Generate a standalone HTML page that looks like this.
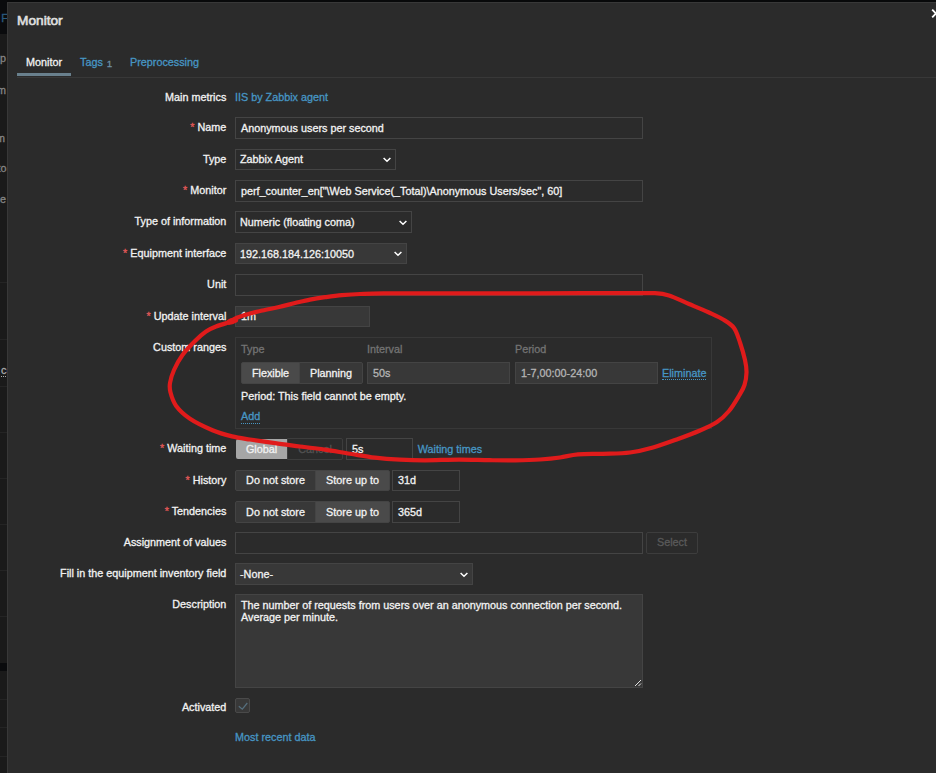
<!DOCTYPE html>
<html><head><meta charset="utf-8"><title>Monitor</title>
<style>
*{box-sizing:border-box;margin:0;padding:0}
html,body{width:936px;height:773px;overflow:hidden;background:#08090a;font-family:"Liberation Sans",Arial,sans-serif;font-size:10.8px;color:#f2f2f2;-webkit-text-stroke:0.3px}
.abs{position:absolute}
#bgstrip{position:absolute;left:0;top:0;width:7px;height:773px;background:#1a1a1a;overflow:hidden}
#bgstrip i{position:absolute;left:0;width:8px;height:1px;background:#242424}
#bgstrip span{position:absolute;left:0;font-size:10.8px;line-height:14px;color:#858585;white-space:nowrap}
#modal{position:absolute;left:7px;top:2px;width:940px;height:790px;background:#2b2b2b;border:1px solid #383838}
h4{position:absolute;left:17px;top:12px;font-size:13.7px;font-weight:normal;color:#e0e0e0;line-height:18px;-webkit-text-stroke:0.6px #e0e0e0}
.close{position:absolute;left:928px;top:7px;font-size:14px;color:#fff;line-height:14px;font-weight:bold}
.tabline{position:absolute;left:17px;top:77px;width:930px;height:1px;background:#383838}
.tab{position:absolute;top:55px;line-height:14px;color:#4796c4;white-space:nowrap}
.tab.act{color:#f2f2f2}
.tabund{position:absolute;left:17px;top:73px;width:54px;height:3px;background:#69808d}
.lbl{position:absolute;right:709.7px;white-space:nowrap;line-height:14px;text-align:right;color:#f2f2f2}
.lbl b{color:#e45959;font-weight:normal}
.inp{position:absolute;left:235px;height:22px;border:1px solid #444;background:#2b2b2b;color:#f2f2f2;line-height:20px;padding-left:5px;white-space:nowrap;overflow:hidden}
.ro{background:#383838}
.sel svg{position:absolute;right:4px;top:50%;margin-top:-2.2px}
a{color:#4796c4;text-decoration:none}
.dot{border-bottom:1px dotted #4796c4}
.seg{position:absolute;height:22px;line-height:20px;border:1px solid #444;border-radius:2px;text-align:center;white-space:nowrap;background:#383838;color:#f2f2f2}
.seg.on{background:#4a4a4a}
.sel{height:21px;line-height:18px}
.hd{position:absolute;top:342px;line-height:14px;color:#737373}
</style></head><body>
<div id="bgstrip">
<div class="abs" style="left:0;top:0;width:8px;height:34px;background:#0a0b0d"></div>
<span style="top:11px;right:-1px;color:#2a5c80;font-size:11px;left:auto">F</span>
<span style="top:51px;left:auto;right:1px">up</span><span style="top:82.5px;left:auto;right:1px">m</span><span style="top:131px;left:auto;right:2px">m</span><span style="top:161px;left:auto;right:0.5px">to</span><span style="top:192px;left:auto;right:1px">ue</span>
<span style="top:364px;color:#a8a8a8;left:1px;border-bottom:1px dotted #aaa;line-height:12px">c(</span>
<i style="top:282px"></i><i style="top:339px"></i><i style="top:386px"></i><i style="top:432px"></i><i style="top:478px"></i><i style="top:524px"></i><i style="top:570px"></i><i style="top:616px"></i><i style="top:699px"></i><i style="top:727px"></i><i style="top:756px"></i>
<i style="top:663px;height:8px;background:#0a0b0d"></i>
</div>
<div id="modal"></div>
<h4>Monitor</h4>
<svg class="abs" style="left:928px;top:6px" width="16" height="16" viewBox="0 0 16 16"><path d="M4.2 3.7 L11.8 11.3 M11.8 3.7 L4.2 11.3" stroke="#fff" stroke-width="1.9" fill="none"/></svg>
<div class="tab act" style="left:26px">Monitor</div>
<div class="tab" style="left:80px">Tags <span style="font-size:9.8px;position:relative;top:1px;left:1px;color:#6d8ea3">1</span></div>
<div class="tab" style="left:130px">Preprocessing</div>
<div class="tabund"></div>
<div class="tabline"></div>

<div class="lbl" style="top:90px">Main metrics</div>
<a class="abs" style="left:235px;top:90px;line-height:14px">IIS by Zabbix agent</a>

<div class="lbl" style="top:120px"><b>*</b> Name</div>
<div class="inp" style="top:117px;width:408px">Anonymous users per second</div>

<div class="lbl" style="top:152px">Type</div>
<div class="inp sel" style="top:149px;width:161px;padding-left:4px">Zabbix Agent<svg width="8" height="6" viewBox="0 0 8 6"><path d="M0.6 1 L4 4.3 L7.4 1" fill="none" stroke="#fff" stroke-width="1.5"/></svg></div>

<div class="lbl" style="top:183px"><b>*</b> Monitor</div>
<div class="inp" style="top:180px;width:408px">perf_counter_en["\Web Service(_Total)\Anonymous Users/sec", 60]</div>

<div class="lbl" style="top:214px">Type of information</div>
<div class="inp sel" style="top:211px;width:177px;padding-left:4px;height:22px;line-height:20px">Numeric (floating coma)<svg width="8" height="6" viewBox="0 0 8 6"><path d="M0.6 1 L4 4.3 L7.4 1" fill="none" stroke="#fff" stroke-width="1.5"/></svg></div>

<div class="lbl" style="top:246px"><b>*</b> Equipment interface</div>
<div class="inp sel ro" style="top:243px;width:172px;padding-left:4px;line-height:20px">192.168.184.126:10050<svg width="8" height="6" viewBox="0 0 8 6"><path d="M0.6 1 L4 4.3 L7.4 1" fill="none" stroke="#fff" stroke-width="1.5"/></svg></div>

<div class="lbl" style="top:277px">Unit</div>
<div class="inp" style="top:274px;width:408px"></div>

<div class="lbl" style="top:309px"><b>*</b> Update interval</div>
<div class="inp ro" style="top:306px;width:135px;height:21px;line-height:19px">1m</div>

<div class="lbl" style="top:340px">Custom ranges</div>
<div class="abs" style="left:235px;top:337px;width:477px;height:92px;border:1px solid #383838"></div>
<div class="hd" style="left:241px">Type</div>
<div class="hd" style="left:367px">Interval</div>
<div class="hd" style="left:515px">Period</div>
<div class="seg on" style="left:241px;top:362px;width:59px;border-radius:2px 0 0 2px">Flexible</div>
<div class="seg" style="left:299px;top:362px;width:64px;border-radius:0 2px 2px 0">Planning</div>
<div class="inp ro" style="left:367px;top:362px;width:143px;color:#b4b4b4">50s</div>
<div class="inp ro" style="left:515px;top:362px;width:143px;color:#b4b4b4">1-7,00:00-24:00</div>
<a class="abs dot" style="left:662px;top:367px;line-height:12px">Eliminate</a>
<div class="abs" style="left:241px;top:389px;line-height:14px">Period: This field cannot be empty.</div>
<a class="abs dot" style="left:241px;top:410px;line-height:13px">Add</a>

<div class="lbl" style="top:441px"><b>*</b> Waiting time</div>
<div class="seg" style="left:236px;top:439px;width:51px;height:20px;line-height:20px;border:0;border-radius:2px 0 0 2px;background:#a6a6a6;color:#f2f2f2">Global</div>
<div class="seg" style="left:287px;top:438px;width:56px;border-radius:0 2px 2px 0;background:#2b2b2b;border-color:#3d3d3d;color:#525252">Cancel</div>
<div class="inp" style="left:346px;top:438px;width:67px">5s</div>
<a class="abs" style="left:417.7px;top:442px;line-height:14px">Waiting times</a>

<div class="lbl" style="top:473px"><b>*</b> History</div>
<div class="seg" style="left:235px;top:470px;width:81px;border-radius:2px 0 0 2px;height:21px;line-height:18px">Do not store</div>
<div class="seg on" style="left:315px;top:470px;width:75px;border-radius:0 2px 2px 0;height:21px;line-height:18px">Store up to</div>
<div class="inp" style="left:392px;top:470px;width:68px;height:21px;line-height:18px">31d</div>

<div class="lbl" style="top:504px"><b>*</b> Tendencies</div>
<div class="seg" style="left:235px;top:501px;width:81px;border-radius:2px 0 0 2px">Do not store</div>
<div class="seg on" style="left:315px;top:501px;width:75px;border-radius:0 2px 2px 0">Store up to</div>
<div class="inp" style="left:392px;top:501px;width:68px">365d</div>

<div class="lbl" style="top:535px">Assignment of values</div>
<div class="inp" style="top:532px;width:408px"></div>
<div class="seg" style="left:646px;top:532px;width:52px;line-height:18px;background:#2b2b2b;border-color:#3d3d3d;color:#5a5a5a">Select</div>

<div class="lbl" style="top:566px">Fill in the equipment inventory field</div>
<div class="inp sel ro" style="top:563px;width:238px;padding-left:4px;height:22px;line-height:20px">-None-<svg width="8" height="6" viewBox="0 0 8 6"><path d="M0.6 1 L4 4.3 L7.4 1" fill="none" stroke="#fff" stroke-width="1.5"/></svg></div>

<div class="lbl" style="top:597px">Description</div>
<div class="inp ro" style="top:594px;width:408px;height:94px;white-space:normal;line-height:12px;padding-top:4px">The number of requests from users over an anonymous connection per second.<br>Average per minute.
<svg class="abs" style="right:0;bottom:0" width="8" height="8" viewBox="0 0 8 8"><path d="M1 7 L7 1 M4.5 7 L7 4.5" stroke="#e0e0e0" stroke-width="1" fill="none"/></svg></div>

<div class="lbl" style="top:700px">Activated</div>
<div class="abs" style="left:235px;top:698px;width:15px;height:15px;border:1px solid #4a4a4a;border-radius:2px;background:#383838"><svg style="display:block" width="13" height="13" viewBox="0 0 13 13"><path d="M2.8 7.2 L6.3 10.2 L11.3 4" fill="none" stroke="#56707f" stroke-width="1.2"/></svg></div>

<a class="abs" style="left:235px;top:730px;line-height:14px">Most recent data</a>

<svg class="abs" style="left:0;top:0" width="936" height="773" viewBox="0 0 936 773"><path id="red" fill="none" stroke="#e01b1b" stroke-width="4.2" stroke-linecap="round" stroke-linejoin="round" d="M229.0 322.5 C230.4 321.7 234.0 319.0 237.5 317.5 C241.0 316.0 245.8 314.7 250.0 313.5 C254.2 312.3 257.7 311.6 262.5 310.5 C267.3 309.4 273.6 308.2 279.0 307.0 C284.4 305.8 289.8 304.2 295.0 303.0 C300.2 301.8 305.0 300.6 310.0 299.6 C315.0 298.6 319.7 297.9 325.0 297.2 C330.3 296.5 336.2 295.7 342.0 295.2 C347.8 294.7 353.0 294.3 360.0 294.0 C367.0 293.7 369.0 293.4 384.0 293.3 C399.0 293.2 427.3 293.3 450.0 293.3 C472.7 293.3 497.7 293.3 520.0 293.3 C542.3 293.3 567.1 293.2 584.0 293.2 C600.9 293.2 609.7 293.2 621.5 293.2 C633.3 293.2 647.1 292.8 655.0 293.2 C662.9 293.6 663.3 293.7 669.0 295.5 C674.7 297.3 682.3 301.2 689.0 304.0 C695.7 306.8 703.2 309.8 709.0 312.5 C714.8 315.2 719.8 317.4 724.0 320.0 C728.2 322.6 731.3 324.2 734.0 328.0 C736.7 331.8 738.2 337.2 740.0 342.5 C741.8 347.8 743.9 355.0 745.0 360.0 C746.1 365.0 746.6 368.3 746.5 372.5 C746.4 376.7 745.7 381.2 744.5 385.0 C743.3 388.8 742.1 390.7 739.5 395.0 C736.9 399.3 732.8 406.5 729.0 411.0 C725.2 415.5 721.8 418.8 717.0 422.0 C712.2 425.2 706.5 427.7 700.0 430.5 C693.5 433.3 685.8 436.2 678.0 439.0 C670.2 441.8 661.0 445.2 653.0 447.5 C645.0 449.8 638.3 451.4 630.0 452.5 C621.7 453.6 611.7 453.5 603.0 453.8 C594.3 454.1 585.2 453.8 578.0 454.4 C570.8 455.0 566.3 456.6 560.0 457.5 C553.7 458.4 547.5 459.0 540.0 459.5 C532.5 460.0 523.3 460.2 515.0 460.3 C506.7 460.4 499.3 460.3 490.0 460.2 C480.7 460.1 469.8 459.6 459.0 459.6 C448.2 459.6 434.8 460.3 425.0 460.3 C415.2 460.3 408.3 460.1 400.0 459.7 C391.7 459.3 383.3 458.7 375.0 457.7 C366.7 456.7 358.3 455.1 350.0 453.8 C341.7 452.5 333.3 450.9 325.0 449.7 C316.7 448.5 308.3 447.6 300.0 446.5 C291.7 445.4 283.3 444.4 275.0 443.2 C266.7 442.0 257.2 440.6 250.0 439.5 C242.8 438.4 238.2 437.9 232.0 436.4 C225.8 434.8 219.5 433.1 212.5 430.2 C205.5 427.2 196.1 422.8 190.0 418.7 C183.9 414.6 179.2 410.1 176.0 405.7 C172.8 401.3 171.5 396.3 170.5 392.5 C169.5 388.7 169.4 386.8 170.0 383.0 C170.6 379.2 171.9 374.7 174.0 370.0 C176.1 365.3 179.0 359.8 182.5 355.0 C186.0 350.2 191.1 344.9 195.0 341.0 C198.9 337.1 202.5 333.9 206.0 331.5 C209.5 329.1 212.4 327.9 216.0 326.5 C219.6 325.1 224.2 323.8 227.5 322.8 C230.8 321.8 234.6 320.9 236.0 320.5"/><ellipse cx="231.5" cy="321.3" rx="5.5" ry="3.2" transform="rotate(-18 231.5 321.3)" fill="#e01b1b"/></svg>
</body></html>
